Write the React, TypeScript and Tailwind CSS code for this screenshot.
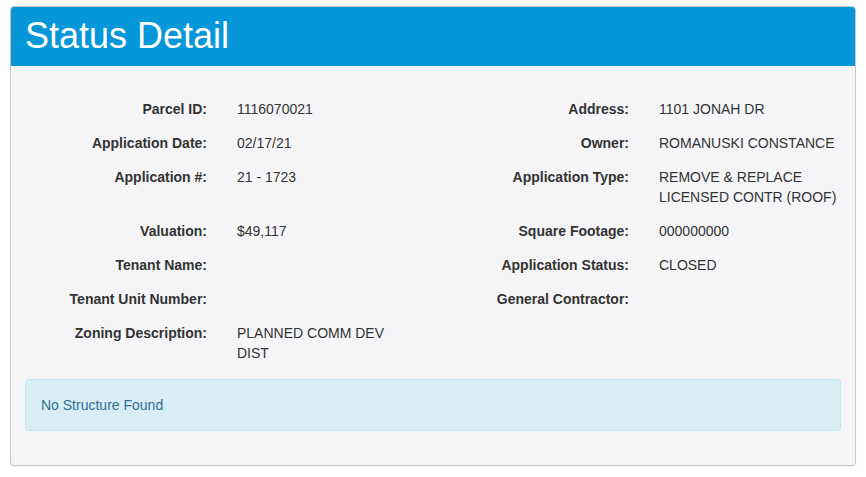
import type { JSX } from "react"

type Field = {
    label: string
    value?: string[]
}

const rows: [Field, Field][] = [
    [
        { label: "Parcel ID:", value: ["1116070021"] },
        { label: "Address:", value: ["1101 JONAH DR"] },
    ],
    [
        { label: "Application Date:", value: ["02/17/21"] },
        { label: "Owner:", value: ["ROMANUSKI CONSTANCE"] },
    ],
    [
        { label: "Application #:", value: ["21 - 1723"] },
        { label: "Application Type:", value: ["REMOVE & REPLACE", "LICENSED CONTR (ROOF)"] },
    ],
    [
        { label: "Valuation:", value: ["$49,117"] },
        { label: "Square Footage:", value: ["000000000"] },
    ],
    [
        { label: "Tenant Name:" },
        { label: "Application Status:", value: ["CLOSED"] },
    ],
    [
        { label: "Tenant Unit Number:" },
        { label: "General Contractor:" },
    ],
    [
        { label: "Zoning Description:", value: ["PLANNED COMM DEV", "DIST"] },
        { label: "" },
    ],
]

function Value({ lines }: { lines?: string[] }) {
    return (
        <div className="text-[#333]">
            {lines?.map((line) => (
                <div key={line}>{line}</div>
            ))}
        </div>
    )
}

export default function App(): JSX.Element {
    return (
        <div className="bg-white min-h-[477px] pt-[6px] px-[10px] font-['Liberation_Sans',Arial,sans-serif]">
            <div className="w-[846px] rounded-[4px] border border-[#c8c8c8] bg-[#f5f5f7] shadow-[0_1px_1px_rgba(0,0,0,0.05)] overflow-hidden">
                {/* Header */}
                <div className="h-[59px] bg-[#0597d8] px-[14px] flex items-center">
                    <h1 className="text-[36px] leading-none text-white mt-[-1px]">Status Detail</h1>
                </div>

                {/* Body */}
                <div className="px-[14px] pt-[33px] pb-[34px]">
                    <div className="grid grid-cols-[182px_176px_186px_1fr] gap-x-[30px] gap-y-[14px] text-[14px] leading-[20px]">
                        {rows.map(([left, right]) => (
                            <div key={left.label} className="contents">
                                <div className="text-right font-bold text-[#333]">{left.label}</div>
                                <Value lines={left.value} />
                                <div className="text-right font-bold text-[#333]">{right.label}</div>
                                <Value lines={right.value} />
                            </div>
                        ))}
                    </div>

                    {/* Alert */}
                    <div className="mt-[16px] rounded-[4px] border border-[#bce8f1] bg-[#d9edf7] px-[15px] py-[15px] text-[14px] leading-[20px] text-[#31708f]">
                        No Structure Found
                    </div>
                </div>
            </div>
        </div>
    )
}
